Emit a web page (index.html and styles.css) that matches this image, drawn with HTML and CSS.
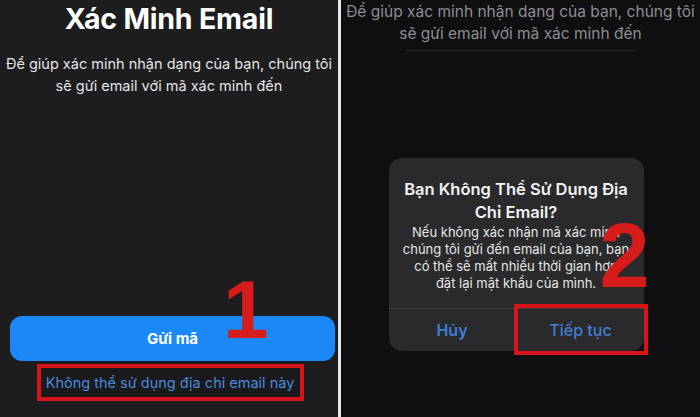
FILE: index.html
```html
<!DOCTYPE html>
<html lang="vi">
<head>
<meta charset="utf-8">
<link rel="stylesheet" href="styles.css">
</head>
<body>
<div class="stage">
  <section class="panel left">
    <h1 class="title">Xác Minh Email</h1>
    <p class="sub">Để giúp xác minh nhận dạng của bạn, chúng tôi<br>sẽ gửi email với mã xác minh đến</p>
    <div class="bottom">
      <div class="btn-wrap">
        <button class="send">Gửi mã</button>
        <span class="num num1">1</span>
      </div>
      <div class="mark link-box"><span class="link">Không thể sử dụng địa chỉ email này</span></div>
    </div>
  </section>
  <div class="divider"></div>
  <section class="panel right">
    <p class="sub dim">Để giúp xác minh nhận dạng của bạn, chúng tôi<br>sẽ gửi email với mã xác minh đến</p>
    <div class="faint"></div>
    <div class="dialog">
      <div class="dlg-body">
        <h2 class="dlg-title">Bạn Không Thể Sử Dụng Địa<br>Chỉ Email?</h2>
        <p class="dlg-text">Nếu không xác nhận mã xác minh<br>chúng tôi gửi đến email của bạn, bạn<br>có thể sẽ mất nhiều thời gian hơn<br>đặt lại mật khẩu của mình.</p>
        <span class="num num2">2</span>
      </div>
      <div class="dlg-actions">
        <div class="act">Hủy</div>
        <div class="act mark act-box">Tiếp tục</div>
      </div>
    </div>
  </section>
</div>
</body>
</html>
```
FILE: styles.css
```css
* { box-sizing: border-box; }
html, body { margin: 0; padding: 0; }
body {
  width: 700px;
  height: 417px;
  overflow: hidden;
  background: #0f0f11;
  font-family: Inter, "Liberation Sans", sans-serif;
}
.stage {
  display: flex;
  width: 700px;
  height: 417px;
}
.panel {
  height: 417px;
  display: flex;
  flex-direction: column;
  align-items: center;
  overflow: hidden;
}
.left {
  width: 338px;
  background: #1d1d1f;
}
.divider {
  width: 3px;
  background: #e8e8e8;
}
.right {
  flex: 1;
  background: #0f0f11;
}
.title {
  margin: 0;
  padding-top: 2px;
  font-size: 28.5px;
  line-height: 34px;
  font-weight: 700;
  color: #ffffff;
  letter-spacing: -0.2px;
}
.sub {
  margin: 17px 0 0;
  font-size: 14.5px;
  line-height: 22px;
  color: #e4e4e4;
  text-align: center;
}
.sub.dim {
  margin-top: 1px;
  font-size: 15.5px;
  color: #8d8d92;
}
.bottom {
  margin-top: auto;
  width: 100%;
  padding: 0 3px 16px 10px;
  display: flex;
  flex-direction: column;
  align-items: center;
}
.btn-wrap {
  position: relative;
  width: 100%;
}
.send {
  display: block;
  width: 100%;
  height: 45px;
  border: 0;
  border-radius: 12px;
  background: #1b88f7;
  color: #ffffff;
  font-family: inherit;
  font-size: 15px;
  font-weight: 700;
}
.num {
  position: absolute;
  color: #d71c1c;
  font-family: "Liberation Sans", Arial, sans-serif;
  font-weight: 700;
  line-height: 1;
}
.num1 {
  left: 213px;
  top: -47px;
  font-size: 82px;
}
.mark {
  border: 4px solid #d7141a;
}
.link-box {
  margin-top: 3px;
  margin-right: 5px;
  width: 267px;
  height: 37px;
  display: flex;
  align-items: center;
  justify-content: center;
  background: #1a1a1c;
}
.link {
  font-size: 14.5px;
  color: #4b89da;
}
.faint {
  margin-top: 5px;
  width: 230px;
  height: 1px;
  background: #2a2a2d;
}
.dialog {
  margin-top: 107px;
  margin-right: 9px;
  width: 255px;
  border-radius: 13px;
  background: #2a2a2c;
  display: flex;
  flex-direction: column;
}
.dlg-body {
  position: relative;
  padding: 20px 10px 16px;
  text-align: center;
}
.dlg-title {
  margin: 0;
  font-size: 16.5px;
  line-height: 23px;
  font-weight: 600;
  color: #f2f2f2;
}
.dlg-text {
  margin: 0;
  font-size: 13px;
  line-height: 17px;
  color: #e6e6e6;
}
.num2 {
  right: -6px;
  top: 53px;
  font-size: 90px;
}
.dlg-actions {
  display: flex;
  border-top: 1px solid #3c3c3f;
  height: 43px;
}
.act {
  flex: 1;
  display: flex;
  align-items: center;
  justify-content: center;
  font-size: 16px;
  color: #3f7fd4;
  font-weight: 500;
}
.act:first-child {
  flex: 0 0 127px;
  font-weight: 600;
}
.act-box {
  margin: -5px -4px -4px -2px;
}
```
